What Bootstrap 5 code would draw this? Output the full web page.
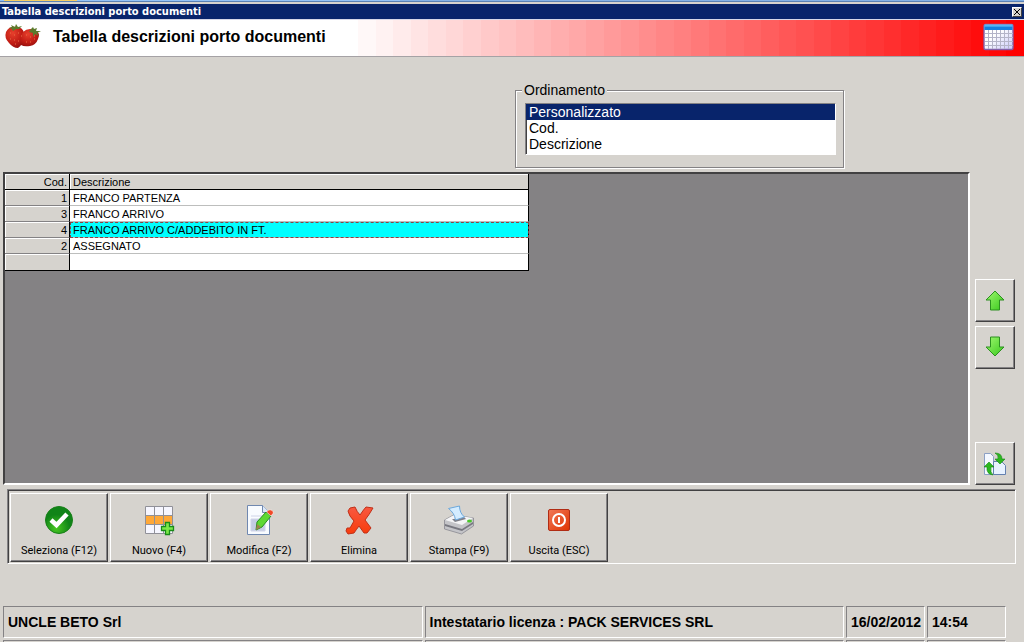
<!DOCTYPE html>
<html lang="it">
<head>
<meta charset="utf-8">
<meta name="viewport" content="width=device-width, initial-scale=1">
<title>Tabella descrizioni porto documenti</title>
<link href="https://cdn.jsdelivr.net/npm/bootstrap@5.3.0/dist/css/bootstrap.min.css" rel="stylesheet">
<style>
:root{--face:#d6d3ce;--dark:#848284;--deep:#424142;--navy:#08246b}
body{background:var(--face);color:#000;font-family:"Liberation Sans",Arial,sans-serif;font-size:14px;line-height:16px}
.back-tabs{height:2px;background:linear-gradient(90deg,#94c3f7 4px,#f7cf63 4px,#f7cf63 77px,#94c3f7 77px,#94c3f7 400px,#84b2e7 400px);border-bottom:1px solid #5a82b5}
.title-bar{height:16px;margin-top:2px;background:var(--navy);background-clip:padding-box;border-bottom:1px solid #d6d7e7;color:#fff;font:bold 11px/15px "DejaVu Sans Condensed","DejaVu Sans",sans-serif;padding:0 2px}
.close-box{width:10px;height:10px;background:var(--face);border:1px solid;border-color:#fff var(--deep) var(--deep) #fff}
.close-box svg{width:6px;height:6px}
.banner{height:37px;border-bottom:1px solid #a5a2a5;padding-bottom:2px}
.banner h1{font-size:16px;line-height:18px;font-weight:bold;margin:0 0 0 11px}
.upper{height:115px;padding:25px 180px 0 0}
.sort-frame{border:1px solid var(--dark);box-shadow:1px 1px #fff,inset 1px 1px #fff;width:329px;height:86px;padding:0 7px 0 9px}
.sort-frame legend{float:none;width:auto;font-size:14px;line-height:16px;margin:0 0 0 -3px;padding:0 2px;background:var(--face)}
.sort-list{display:block;width:100%;height:52px;margin-top:5px;padding:0;overflow:hidden;border:1px solid;border-color:var(--dark) #fff #fff var(--dark);box-shadow:inset 1px 1px var(--deep);border-radius:0;background:#fff;font-size:14px;outline:0}
.sort-list option{height:16px;min-height:16px;line-height:16px;padding:0 3px}
.sort-list option:checked{background:linear-gradient(var(--navy),var(--navy));-webkit-text-fill-color:#fff}
.work{padding:0 9px 0 3px;gap:5px}
.grid-pane{background:var(--dark);border:2px solid;border-color:var(--deep) #fff #fff var(--deep);min-height:120px}
.codes{width:524px;table-layout:fixed;border-collapse:separate;border-spacing:0;font-size:11px;line-height:14px;color:#000}
.codes th,.codes td{height:16px;padding:1px 3px 0;font-weight:400;white-space:nowrap;border-bottom:1px solid #bdbebd}
.codes tr>:first-child{width:65px;text-align:right;padding-right:2px;background:var(--face);border-right:1px solid #000;border-bottom-color:var(--dark);box-shadow:inset 1px 1px #fff}
.codes tr>:last-child{border-right:1px solid #000}
.codes thead th:last-child{background:var(--face);box-shadow:inset 1px 1px #fff}
.codes thead tr>*,.codes tbody tr:last-child>*{border-bottom-color:#000!important}
.codes tbody td:last-child{background:#fff}
.codes tbody tr:last-child>*{height:17px}
.codes tbody tr.current td{background:#0ff;outline:1px dashed #844;outline-offset:-1px}
.side{padding-top:107px;width:40px}
.raised{background:var(--face);border:1px solid;border-color:#fff var(--deep) var(--deep) #fff;box-shadow:inset -1px -1px var(--dark);border-radius:0;padding:0;color:#000}
.side .raised{height:43px;width:40px}
.tools{margin:4px 8px 0 7px;height:75px;border:1px solid;border-color:var(--dark) #fff #fff var(--dark);box-shadow:inset 1px 1px var(--deep);padding:3px 2px 1px;gap:2px}
.tools .raised{width:98px;height:69px;padding:10px 0 3px;font:11px/14px Roboto,sans-serif}
.tools svg{width:32px;height:32px}
.status{margin:42px 18px 0 3px;display:grid;grid-template-columns:1fr 1fr 79px 79px;gap:2px;font-size:14px;font-weight:bold;grid-template-rows:32px 2px;overflow:hidden}
.status>div{border:1px solid;border-color:var(--dark) #fff #fff var(--dark);padding:7px 0 0 4px;white-space:nowrap;overflow:hidden}
.status>.under{padding:0;border-bottom:0}
</style>
</head>
<body class="d-flex flex-column vh-100 overflow-hidden">
<div class="back-tabs flex-shrink-0"></div>
<header class="flex-shrink-0">
  <div class="title-bar d-flex align-items-center justify-content-between">
    <span>Tabella descrizioni porto documenti</span>
    <button class="close-box p-0 d-flex align-items-center justify-content-center" aria-label="Chiudi"><svg viewBox="0 0 6 6"><path d="M0 0l6 6M6 0L0 6" stroke="#000"/></svg></button>
  </div>
  <div class="banner d-flex align-items-center" id="banner">
    <svg class="ms-1" width="38" height="26" viewBox="0 0 38 26" aria-hidden="true">
      <defs><radialGradient id="berry" cx=".4" cy=".3" r=".8"><stop offset="0" stop-color="#e8402c"/><stop offset=".6" stop-color="#c01c14"/><stop offset="1" stop-color="#8c0c0c"/></radialGradient></defs>
      <path d="M2 8Q5 2 12 3Q19 3 20 9Q20 20 14 24Q9 24 5 19Q0 14 2 8z" fill="url(#berry)"/>
      <path d="M19 8Q24 3 31 6Q37 9 34 15Q32 21 26 22Q20 23 17 21Q16 12 19 8z" fill="url(#berry)"/>
      <path d="M5 4l3-1-1-2 4 2 1-3 2 3 4-1-3 3-3 0-3 2-1-2zM27 5l2-2 1 2 3-1-1 3 5 0-4 2 2 3-4-2-2 3 0-4-4-1z" fill="#5c7a2c"/>
      <path d="M6 9h1m3 2h1m3-2h1m2 3h1m-12 3h1m3 1h1m3 1h1m-4 3h1m10-9h1m3 2h1m3-1h1m-9 6h1m3 0h1m3-3h1" stroke="#e87048"/>
    </svg>
    <h1>Tabella descrizioni porto documenti</h1>
    <svg class="ms-auto me-2" width="34" height="28" viewBox="0 0 34 28" aria-hidden="true">
      <defs><linearGradient id="cal" x2="1" y2="1"><stop offset=".4" stop-color="#fff"/><stop offset="1" stop-color="#c8c8fa"/></linearGradient></defs>
      <rect x="2" y="1.500" width="29" height="25" rx="1.500" fill="url(#cal)" stroke="#8460a8" stroke-width="1.400"/>
      <path d="M2.500 2h28v5h-28z" fill="#1482e0"/><path d="M2.500 2h28M2.500 3h28" stroke="#6cc8f8"/>
      <path d="M6.500 7v19m4-19v19m4-19v19m4-19v19m4-19v19m4-19v19M3 10.500h28m-28 4h28m-28 4h28m-28 4h28" stroke="#b4b4c8"/>
    </svg>
  </div>
</header>
<section class="upper d-flex justify-content-end flex-shrink-0">
  <fieldset class="sort-frame">
    <legend id="sortLabel">Ordinamento</legend>
    <select class="sort-list" size="3" aria-labelledby="sortLabel">
      <option selected>Personalizzato</option><option>Cod.</option><option>Descrizione</option>
    </select>
  </fieldset>
</section>
<main class="work d-flex flex-grow-1">
  <div class="grid-pane flex-grow-1">
    <table class="codes">
      <thead><tr><th>Cod.</th><th>Descrizione</th></tr></thead>
      <tbody>
        <tr><th>1</th><td>FRANCO PARTENZA</td></tr>
        <tr><th>3</th><td>FRANCO ARRIVO</td></tr>
        <tr class="current"><th>4</th><td>FRANCO ARRIVO C/ADDEBITO IN FT.</td></tr>
        <tr><th>2</th><td>ASSEGNATO</td></tr>
        <tr><th></th><td></td></tr>
      </tbody>
    </table>
  </div>
  <div class="side d-flex flex-column">
    <button class="raised mb-1" aria-label="Su"><svg width="22" height="24" viewBox="0 0 22 24"><defs><linearGradient id="leaf" x2="1" y2="1"><stop stop-color="#a0f870"/><stop offset="1" stop-color="#38c81c"/></linearGradient></defs><path d="M11 2l9 9h-4.500v10h-9V11H2z" fill="url(#leaf)" stroke="#2c9020"/></svg></button>
    <button class="raised" aria-label="Giù"><svg width="22" height="24" viewBox="0 0 22 24"><path d="M11 20l9-9h-4.500V1h-9v10H2z" fill="url(#leaf)" stroke="#2c9020"/></svg></button>
    <button class="raised mt-auto" aria-label="Aggiorna"><svg width="24" height="24" viewBox="0 0 24 24"><path d="M1.500 1.500h6l3 3v18h-9z" fill="#f4f8ff" stroke="#8ca0c4"/><path d="M10.500 9.500h8l4 4v9h-12z" fill="#e8f2ff" stroke="#6480b0"/><path d="M12 1q7 0 7 6h3l-5 5-5-5h3q1-4-3-6zM10 23q-7-1-6-8H1l5-5 5 5H8q-1 5 2 8z" fill="#2cb820" stroke="#168414" stroke-width=".6"/></svg></button>
  </div>
</main>
<nav class="tools d-flex flex-shrink-0" aria-label="Comandi">
  <button class="raised d-flex flex-column align-items-center"><svg viewBox="0 0 32 32"><defs><radialGradient id="ok" cx=".4" cy=".8"><stop stop-color="#48c820"/><stop offset="1" stop-color="#108418"/></radialGradient></defs><circle cx="16" cy="16" r="13.500" fill="url(#ok)" stroke="#188018"/><path d="M8 16l5.500 5L24 10" fill="none" stroke="#fff" stroke-width="4.500"/></svg><span class="mt-auto">Seleziona (F12)</span></button>
  <button class="raised d-flex flex-column align-items-center"><svg viewBox="0 0 32 32"><path d="M2.500 2.500h27v27h-27z" fill="#f6f6ff"/><path d="M2 11.500h28v9H2z" fill="#ffa838"/><path d="M2.500 2.500h27v27h-27zM11.500 2.500v27m9-27v27m-18-18h27m-27 9h27" fill="none" stroke="#909098"/><path d="M22.500 18.500h4v4h4v4h-4v4h-4v-4h-4v-4h4z" fill="#7ce848" stroke="#188c18" stroke-width="1.300"/></svg><span class="mt-auto">Nuovo (F4)</span></button>
  <button class="raised d-flex flex-column align-items-center"><svg viewBox="0 0 32 32"><path d="M4.500 1.500h15l7 7v22h-22z" fill="#f8fbff" stroke="#7088b0"/><path d="M19.500 1.500v7h7" fill="#dce8f8" stroke="#7088b0"/><path d="M8 12h15M8 15h14v12H8z" fill="#c4cce4" stroke="#d0d4e8"/><path d="M13 26l1-8L23 8l5 4-9 11z" fill="#5ed834" stroke="#289020"/><path d="M23.500 8l2-2q4-1 5 3l-2.500 3z" fill="#f04828" stroke="#fff" stroke-width=".6"/><path d="M13 26l1-6 4 3z" fill="#a08050"/></svg><span class="mt-auto">Modifica (F2)</span></button>
  <button class="raised d-flex flex-column align-items-center"><svg viewBox="0 0 32 32"><defs><linearGradient id="no" y2="1" x2="0"><stop stop-color="#f85840"/><stop offset="1" stop-color="#f83c0c"/></linearGradient></defs><path d="M7 4l5-1q2 5 5 8 4-6 6-8l7 1q-4 7-8 12l6 8-4 5h-3l-5-7q-3 4-5 7l-6 1-2-3 1-3h3l4-7q-5-5-6-10z" fill="url(#no)" stroke="#c03018"/></svg><span class="mt-auto">Elimina</span></button>
  <button class="raised d-flex flex-column align-items-center"><svg viewBox="0 0 32 32"><path d="M1.500 16l9-5 20 3v8l-12 8-17-5z" fill="#c4c4c8" stroke="#808088" stroke-width=".7"/><path d="M2 16l9-5 19 3-11 7z" fill="#f4f4f6"/><path d="M2 20l17 5 11-7v2l-11 7-17-5z" fill="#787880"/><path d="M9 15l3 3 11-3-2-2-10 2z" fill="#808088"/><path d="M5.500 4.500l11-2.500q0 7 5 11l-9 3q-1-7-7-11.500z" fill="#d4ecff" stroke="#6ca8dc"/><ellipse cx="26.500" cy="17" rx="2.500" ry="1.500" fill="#48c828"/></svg><span class="mt-auto">Stampa (F9)</span></button>
  <button class="raised d-flex flex-column align-items-center"><svg viewBox="0 0 32 32"><defs><linearGradient id="off" x2="1" y2="1"><stop stop-color="#f07858"/><stop offset="1" stop-color="#e03400"/></linearGradient></defs><rect x="5.500" y="5.500" width="21" height="21" rx="1.500" fill="url(#off)" stroke="#b02c14"/><circle cx="16" cy="16" r="6" fill="none" stroke="#fff" stroke-width="2"/><path d="M16 13v6" stroke="#fff" stroke-width="2"/></svg><span class="mt-auto">Uscita (ESC)</span></button>
</nav>
<footer class="status flex-shrink-0">
  <div>UNCLE BETO Srl</div><div>Intestatario licenza : PACK SERVICES SRL</div><div>16/02/2012</div><div>14:54</div>
  <div class="under"></div><div class="under"></div><div class="under"></div><div class="under"></div>
</footer>
<script>
// Banner background: white to red in 38 flat bands, across the right two thirds.
const bands = 38, from = 35, stops = ['#fff ' + from + '%'];
for (let i = 1; i <= bands; i++) {
  const c = Math.round(255 * (1 - i / bands));
  const a = from + (i - 1) * (100 - from) / bands, b = from + i * (100 - from) / bands;
  stops.push(`rgb(255,${c},${c}) ${a}% ${b}%`);
}
document.getElementById('banner').style.background = `linear-gradient(90deg,${stops.join()}) padding-box`;
</script>
<script src="https://cdn.jsdelivr.net/npm/bootstrap@5.3.0/dist/js/bootstrap.bundle.min.js"></script>
</body>
</html>
